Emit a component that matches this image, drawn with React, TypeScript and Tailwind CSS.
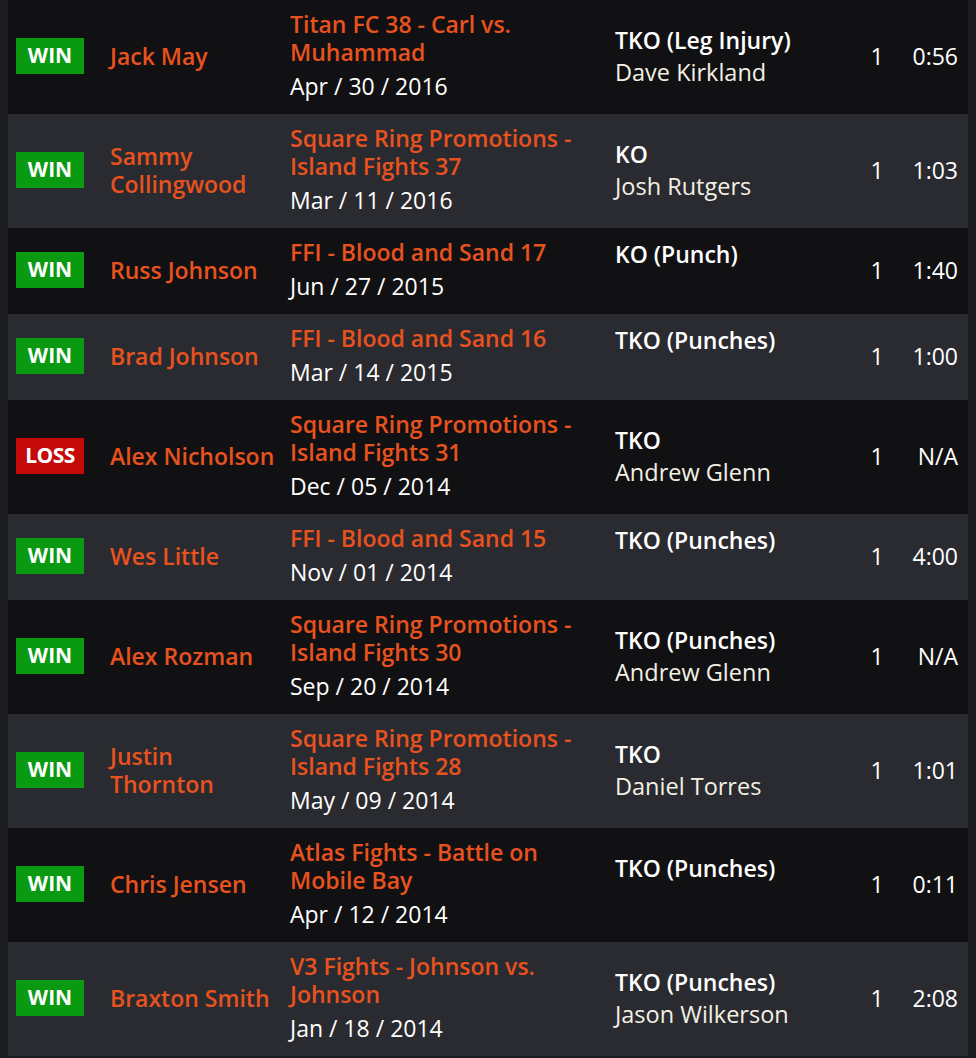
type Fight = {
  result: "WIN" | "LOSS";
  opponent: string;
  event: string;
  date: string;
  method: string;
  referee: string;
  round: string;
  time: string;
};

const fights: Array<Fight> = [
  { result: "WIN", opponent: "Jack May", event: "Titan FC 38 - Carl vs. Muhammad", date: "Apr / 30 / 2016", method: "TKO (Leg Injury)", referee: "Dave Kirkland", round: "1", time: "0:56" },
  { result: "WIN", opponent: "Sammy Collingwood", event: "Square Ring Promotions - Island Fights 37", date: "Mar / 11 / 2016", method: "KO", referee: "Josh Rutgers", round: "1", time: "1:03" },
  { result: "WIN", opponent: "Russ Johnson", event: "FFI - Blood and Sand 17", date: "Jun / 27 / 2015", method: "KO (Punch)", referee: "", round: "1", time: "1:40" },
  { result: "WIN", opponent: "Brad Johnson", event: "FFI - Blood and Sand 16", date: "Mar / 14 / 2015", method: "TKO (Punches)", referee: "", round: "1", time: "1:00" },
  { result: "LOSS", opponent: "Alex Nicholson", event: "Square Ring Promotions - Island Fights 31", date: "Dec / 05 / 2014", method: "TKO", referee: "Andrew Glenn", round: "1", time: "N/A" },
  { result: "WIN", opponent: "Wes Little", event: "FFI - Blood and Sand 15", date: "Nov / 01 / 2014", method: "TKO (Punches)", referee: "", round: "1", time: "4:00" },
  { result: "WIN", opponent: "Alex Rozman", event: "Square Ring Promotions - Island Fights 30", date: "Sep / 20 / 2014", method: "TKO (Punches)", referee: "Andrew Glenn", round: "1", time: "N/A" },
  { result: "WIN", opponent: "Justin Thornton", event: "Square Ring Promotions - Island Fights 28", date: "May / 09 / 2014", method: "TKO", referee: "Daniel Torres", round: "1", time: "1:01" },
  { result: "WIN", opponent: "Chris Jensen", event: "Atlas Fights - Battle on Mobile Bay", date: "Apr / 12 / 2014", method: "TKO (Punches)", referee: "", round: "1", time: "0:11" },
  { result: "WIN", opponent: "Braxton Smith", event: "V3 Fights - Johnson vs. Johnson", date: "Jan / 18 / 2014", method: "TKO (Punches)", referee: "Jason Wilkerson", round: "1", time: "2:08" },
];

function ResultBadge({ result }: { result: Fight["result"] }) {
  const win = result === "WIN";
  return (
    <span
      className={
        win
          ? "flex h-[36px] w-[68px] items-center justify-center bg-[#0a9a12] text-[21px] font-bold text-white"
          : "flex h-[36px] w-[68px] items-center justify-center bg-[#c40a0a] text-[21px] font-bold tracking-[-0.5px] text-white"
      }
    >
      {result}
    </span>
  );
}

function FightRow({ fight, index }: { fight: Fight; index: number }) {
  const bg = index % 2 === 0 ? "bg-[#111113]" : "bg-[#2a2b30]";
  return (
    <div className={`flex items-center ${bg} pt-[10px] pb-[12px]`}>
      <div className="w-[102px] shrink-0 pl-[8px]">
        <ResultBadge result={fight.result} />
      </div>
      <div className="w-[180px] shrink-0 pr-[12px] text-[23px] font-semibold leading-[28px] text-[#e8521e]">
        {fight.opponent}
      </div>
      <div className="w-[325px] shrink-0 pr-[10px]">
        <div className="text-[23px] font-semibold leading-[28px] text-[#e8521e]">{fight.event}</div>
        <div className="mt-[4px] text-[23px] leading-[32px] text-white">{fight.date}</div>
      </div>
      <div className="w-[242px] shrink-0">
        <div className="text-[23px] font-semibold leading-[32px] text-white">{fight.method}</div>
        <div className="h-[32px] text-[23.5px] leading-[32px] text-[#f4f0e4]">{fight.referee}</div>
      </div>
      <div className="w-[40px] shrink-0 text-center text-[23px] text-white">{fight.round}</div>
      <div className="flex-1 pr-[10px] text-right text-[23px] text-white">{fight.time}</div>
    </div>
  );
}

export default function App() {
  return (
    <div
      className="min-h-[1058px] w-[976px] bg-[#1c1d21] px-[8px] pb-[2px]"
      style={{ fontFamily: '"Open Sans", "Noto Sans", sans-serif' }}
    >
      <div className="flex flex-col">
        {fights.map((f, i) => (
          <FightRow key={i} fight={f} index={i} />
        ))}
      </div>
    </div>
  );
}
